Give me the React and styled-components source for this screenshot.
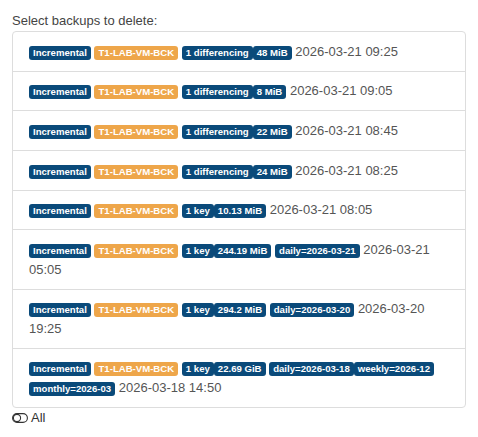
import React from "react";
import styled, { createGlobalStyle } from "styled-components";

const backups = [
  { sizeKind: "1 differencing", size: "48 MiB", tags: [], date: "2026-03-21 09:25" },
  { sizeKind: "1 differencing", size: "8 MiB", tags: [], date: "2026-03-21 09:05" },
  { sizeKind: "1 differencing", size: "22 MiB", tags: [], date: "2026-03-21 08:45" },
  { sizeKind: "1 differencing", size: "24 MiB", tags: [], date: "2026-03-21 08:25" },
  { sizeKind: "1 key", size: "10.13 MiB", tags: [], date: "2026-03-21 08:05" },
  { sizeKind: "1 key", size: "244.19 MiB", tags: ["daily=2026-03-21"], date: "2026-03-21 05:05" },
  { sizeKind: "1 key", size: "294.2 MiB", tags: ["daily=2026-03-20"], date: "2026-03-20 19:25" },
  {
    sizeKind: "1 key",
    size: "22.69 GiB",
    tags: ["daily=2026-03-18", "weekly=2026-12", "monthly=2026-03"],
    date: "2026-03-18 14:50",
  },
];

const ToggleOff = () => (
  <svg width="16" height="10" viewBox="0 0 16 10" fill="none" stroke="#333" strokeWidth="1.1">
    <rect x="0.6" y="0.6" width="14.8" height="8.8" rx="4.4" />
    <circle cx="5" cy="5" r="3.6" />
  </svg>
);

const App = () => (
  <>
    <GlobalStyle />
    <Page>
      <Label>Select backups to delete:</Label>
      <List>
        {backups.map((b) => (
          <Row key={b.date}>
            <Badge>Incremental</Badge> <Badge $tone="orange">T1-LAB-VM-BCK</Badge>{" "}
            <Badge>{b.sizeKind}</Badge>
            <Badge>{b.size}</Badge>{" "}
            {b.tags.map((t) => (
              <Badge key={t}>{t}</Badge>
            ))}
            {b.tags.length ? " " : null}
            {b.date}
          </Row>
        ))}
      </List>
      <Footer>
        <ToggleOff />
        <span>All</span>
      </Footer>
    </Page>
  </>
);

const GlobalStyle = createGlobalStyle`
  body {
    margin: 0;
    background: #fff;
    font-family: "Liberation Sans", Arial, sans-serif;
  }
`;

const Page = styled.div`
  padding: 12px 12px;
  font-size: 13px;
  color: #444;
`;

const Label = styled.div`
  line-height: 18px;
  margin-bottom: 1px;
`;

const List = styled.div`
  border: 1px solid #ddd;
  border-radius: 4px;
`;

const Row = styled.div`
  padding: 9.6px 16px;
  line-height: 19.5px;
  color: #555;
  & + & {
    border-top: 1px solid #ddd;
  }
`;

const Badge = styled.span`
  display: inline-block;
  padding: 2px 4px;
  font-size: 9.6px;
  font-weight: bold;
  line-height: 10px;
  color: #fff;
  border-radius: 3px;
  background: ${(p) => (p.$tone === "orange" ? "#eea64a" : "#0a4a7a")};
`;

const Footer = styled.div`
  display: flex;
  align-items: center;
  gap: 3px;
  margin-top: 1px;
  line-height: 18px;
  color: #333;
`;

export default App;
